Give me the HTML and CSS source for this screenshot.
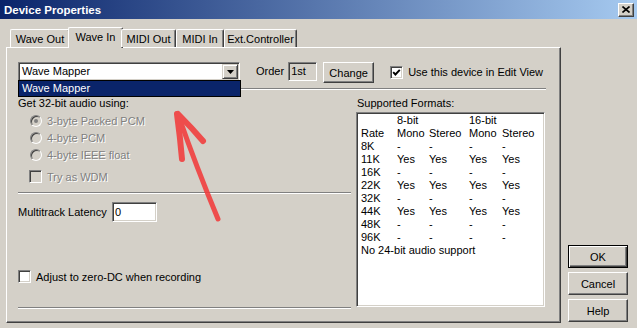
FILE: index.html
```html
<!DOCTYPE html>
<html lang="en">
<head>
    <meta charset="UTF-8">
    <meta name="viewport" content="width=device-width, initial-scale=1.0">
    <title>Device Properties</title>
    <link rel="stylesheet" href="styles.css">
</head>
<body>
    <div class="titlebar">
        <span class="title">Device Properties</span>
        <span class="close-btn">
            <svg width="8" height="7" viewBox="0 0 8 7"><path d="M0.5 0.5 L7.5 6.5 M7.5 0.5 L0.5 6.5" stroke="#000" stroke-width="1.6" fill="none"/></svg>
        </span>
    </div>

    <div class="dialog">
        <div class="tabs-area">
            <div class="tabs">
                <div class="tab tab-waveout">Wave Out</div>
                <div class="tab tab-wavein active">Wave In</div>
                <div class="tab tab-midiout">MIDI Out</div>
                <div class="tab tab-midiin">MIDI In</div>
                <div class="tab tab-ext">Ext.Controller</div>
            </div>

            <div class="panel">
                <!-- fila del dispositivo -->
                <div class="device-row">
                    <div class="combo">
                        <span class="combo-text">Wave Mapper</span>
                        <span class="combo-btn">
                            <svg width="7" height="4" viewBox="0 0 7 4"><path d="M0 0 H7 L3.5 4 Z" fill="#000"/></svg>
                        </span>
                        <div class="combo-list">Wave Mapper</div>
                    </div>
                    <span class="order-label">Order</span>
                    <span class="field order-field">1st</span>
                    <button class="btn change-btn">Change</button>
                    <span class="checkbox edit-check">
                        <svg width="9" height="9" viewBox="0 0 9 9"><path d="M1.2 4.2 L3.4 6.5 L7.8 1.8" stroke="#000" stroke-width="1.9" fill="none"/></svg>
                    </span>
                    <span class="check-label">Use this device in Edit View</span>
                </div>

                <div class="sep sep-top"></div>

                <div class="columns">
                    <div class="col-left">
                        <div class="cap">Get 32-bit audio using:</div>
                        <div class="radio-group">
                            <div class="radio-row"><span class="radio checked"></span><span class="disabled">3-byte Packed PCM</span></div>
                            <div class="radio-row"><span class="radio"></span><span class="disabled">4-byte PCM</span></div>
                            <div class="radio-row"><span class="radio"></span><span class="disabled">4-byte IEEE float</span></div>
                        </div>
                        <div class="wdm-row"><span class="checkbox gray"></span><span class="disabled">Try as WDM</span></div>

                        <div class="sep sep-mid"></div>

                        <div class="latency-row">
                            <span class="latency-label">Multitrack Latency</span>
                            <span class="field latency-input">0</span>
                        </div>

                        <div class="adjust-row"><span class="checkbox"></span><span class="check-label">Adjust to zero-DC when recording</span></div>

                        <div class="sep sep-bottom"></div>
                    </div>

                    <div class="col-right">
                        <div class="cap cap-formats">Supported Formats:</div>
                        <div class="formats">
                            <span></span><span>8-bit</span><span></span><span>16-bit</span><span></span>
                            <span>Rate</span><span>Mono</span><span>Stereo</span><span>Mono</span><span>Stereo</span>
                            <span>8K</span><span>-</span><span>-</span><span>-</span><span>-</span>
                            <span>11K</span><span>Yes</span><span>Yes</span><span>Yes</span><span>Yes</span>
                            <span>16K</span><span>-</span><span>-</span><span>-</span><span>-</span>
                            <span>22K</span><span>Yes</span><span>Yes</span><span>Yes</span><span>Yes</span>
                            <span>32K</span><span>-</span><span>-</span><span>-</span><span>-</span>
                            <span>44K</span><span>Yes</span><span>Yes</span><span>Yes</span><span>Yes</span>
                            <span>48K</span><span>-</span><span>-</span><span>-</span><span>-</span>
                            <span>96K</span><span>-</span><span>-</span><span>-</span><span>-</span>
                            <span class="formats-note">No 24-bit audio support</span>
                        </div>
                    </div>
                </div>
            </div>
        </div>

        <div class="buttons">
            <button class="btn btn-default">OK</button>
            <button class="btn">Cancel</button>
            <button class="btn">Help</button>
        </div>
    </div>

    <!-- flecha roja dibujada encima -->
    <svg class="arrow" width="637" height="328" viewBox="0 0 637 328">
        <g fill="none" stroke="#f23c3c" stroke-linecap="round" opacity="0.88">
            <path d="M179 117 Q 196 166 218 219" stroke-width="5"/>
            <path d="M177 114 Q 180 136 182 159" stroke-width="6"/>
            <path d="M178 114 Q 192 128 203 141" stroke-width="6"/>
        </g>
    </svg>
</body>
</html>
```

FILE: styles.css
```css
* {
    box-sizing: border-box;
}
body {
    margin: 0;
    width: 637px;
    height: 328px;
    overflow: hidden;
    position: relative;
    background: #d4d0c8;
    font-family: "Liberation Sans", Arial, sans-serif;
    font-size: 11px;
    color: #000;
}
.titlebar {
    height: 19px;
    display: flex;
    align-items: center;
    justify-content: space-between;
    padding: 0 3px 0 4px;
    background: linear-gradient(to right, #0a246a, #a6caf0);
}
.title {
    color: #fff;
    font-weight: bold;
    font-size: 11.5px;
}
.close-btn {
    width: 16px;
    height: 14px;
    display: flex;
    align-items: center;
    justify-content: center;
    background: #d4d0c8;
    border: 1px solid;
    border-color: #fff #404040 #404040 #fff;
    box-shadow: inset -1px -1px #808080;
}
.dialog {
    display: flex;
    margin-top: 8px;
    padding-left: 6px;
}
.tabs-area {
    width: 555px;
}
.tabs {
    display: flex;
    align-items: flex-end;
    height: 21px;
    padding-left: 4px;
    margin-bottom: -1px;
    position: relative;
    z-index: 1;
}
.tab {
    height: 18px;
    margin-bottom: 1px;
    display: flex;
    align-items: center;
    justify-content: center;
    background: #d4d0c8;
    border-top: 1px solid #fff;
    border-left: 1px solid #fff;
    border-right: 1px solid #404040;
    box-shadow: inset -1px 0 #808080;
    border-radius: 2px 2px 0 0;
}
.tab.active {
    height: 21px;
    margin: 0 -2px;
    padding-bottom: 2px;
}
.tab-waveout { width: 60px; }
.tab-wavein { width: 55px; }
.tab-midiout { width: 55px; }
.tab-midiin { width: 48px; }
.tab-ext { width: 73px; }
.panel {
    height: 276px;
    padding: 14px 0 0 11px;
    border: 1px solid;
    border-color: #fff #404040 #404040 #fff;
    box-shadow: inset -1px -1px #808080;
}
.device-row {
    display: flex;
    align-items: flex-start;
    height: 21px;
}
.sunken, .combo, .field, .checkbox, .formats {
    border: 1px solid;
    border-color: #808080 #fff #fff #808080;
    box-shadow: inset 1px 1px #404040, inset -1px -1px #d4d0c8;
}
.combo {
    position: relative;
    width: 222px;
    height: 19px;
    padding: 1px;
    background: #fff;
    display: flex;
    justify-content: space-between;
}
.combo-text {
    padding-left: 2px;
    line-height: 15px;
}
.combo-btn {
    width: 16px;
    height: 15px;
    display: flex;
    align-items: center;
    justify-content: center;
    background: #d4d0c8;
    border: 1px solid;
    border-color: #d4d0c8 #404040 #404040 #d4d0c8;
    box-shadow: inset 1px 1px #fff, inset -1px -1px #808080;
}
.combo-list {
    position: absolute;
    left: -1px;
    top: 17px;
    width: 223px;
    height: 17px;
    padding-left: 3px;
    line-height: 15px;
    background: #0a246a;
    color: #fff;
    border: 1px solid #000;
    z-index: 2;
}
.order-label {
    margin-left: 16px;
    line-height: 19px;
}
.field {
    height: 19px;
    padding-left: 2px;
    line-height: 17px;
}
.order-field {
    width: 29px;
    margin-left: 4px;
    background: #d4d0c8;
}
.btn {
    height: 23px;
    padding: 0;
    font-family: inherit;
    font-size: 11px;
    color: #000;
    background: #d4d0c8;
    border: 1px solid;
    border-color: #fff #404040 #404040 #fff;
    box-shadow: inset -1px -1px #808080;
}
.change-btn {
    width: 51px;
    height: 21px;
    margin-left: 6px;
}
.checkbox {
    width: 13px;
    height: 13px;
    display: flex;
    align-items: center;
    justify-content: center;
    background: #fff;
    flex-shrink: 0;
}
.checkbox.gray {
    background: #d4d0c8;
}
.edit-check {
    margin: 4px 0 0 16px;
}
.check-label {
    margin-left: 5px;
}
.device-row .check-label {
    line-height: 21px;
}
.sep {
    height: 2px;
    border-top: 1px solid #808080;
    border-bottom: 1px solid #fff;
}
.sep-top {
    width: 528px;
    margin-top: 5px;
}
.columns {
    display: flex;
    gap: 5px;
    padding-top: 7px;
}
.col-left {
    width: 333px;
    display: flex;
    flex-direction: column;
}
.cap {
    line-height: 13px;
}
.radio-group {
    margin: 2px 0 0 12px;
}
.radio-row {
    height: 17px;
    display: flex;
    align-items: center;
}
.radio {
    width: 12px;
    height: 12px;
    margin-right: 5px;
    position: relative;
    border-radius: 50%;
    background: #d4d0c8;
    border: 1px solid;
    border-color: #808080 #fff #fff #808080;
    box-shadow: inset 1px 1px #404040, inset -1px -1px #d4d0c8;
}
.radio.checked::after {
    content: '';
    position: absolute;
    top: 3px;
    left: 3px;
    width: 4px;
    height: 4px;
    border-radius: 50%;
    background: #808080;
}
.disabled {
    color: #808080;
    text-shadow: 1px 1px 0 #fff;
}
.wdm-row {
    height: 17px;
    margin: 5px 0 0 11px;
    display: flex;
    align-items: center;
    gap: 5px;
}
.sep-mid {
    margin-top: 7px;
}
.latency-row {
    height: 20px;
    margin-top: 8px;
    display: flex;
    align-items: center;
}
.latency-label {
    width: 94px;
}
.latency-input {
    width: 45px;
    height: 20px;
    background: #fff;
    line-height: 18px;
}
.adjust-row {
    height: 17px;
    margin-top: 46px;
    display: flex;
    align-items: center;
}
.sep-bottom {
    margin-top: 22px;
}
.col-right {
    width: 189px;
}
.cap-formats {
    padding-left: 1px;
}
.formats {
    height: 195px;
    margin-top: 2px;
    padding: 1px 0 0 4px;
    background: #fff;
    display: grid;
    grid-template-columns: 36px 32px 40px 33px auto;
    grid-auto-rows: 13px;
    line-height: 13px;
    align-content: start;
}
.formats-note {
    grid-column: 1 / -1;
}
.buttons {
    align-self: flex-end;
    margin: 0 0 1px 7px;
    display: flex;
    flex-direction: column;
    gap: 4px;
}
.buttons .btn {
    width: 60px;
}
.btn-default {
    border: 1px solid #000;
    box-shadow: inset 1px 1px #fff, inset -1px -1px #404040, inset -2px -2px #808080;
}
.arrow {
    position: absolute;
    left: 0;
    top: 0;
    pointer-events: none;
}
```
